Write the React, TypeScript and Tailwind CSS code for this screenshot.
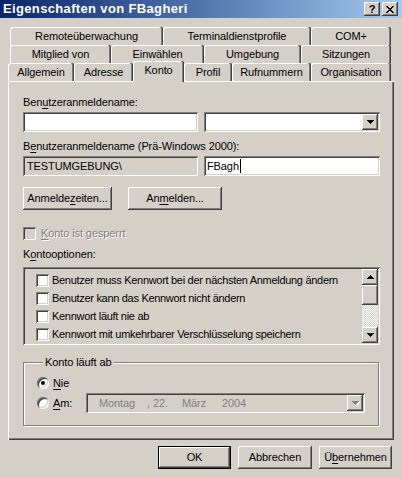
import type { ReactNode } from 'react';

const raised =
  'bg-[#d4d0c8] shadow-[inset_-1px_-1px_#404040,inset_1px_1px_#ffffff,inset_-2px_-2px_#808080,inset_2px_2px_#d4d0c8]';
const sunken =
  'shadow-[inset_1px_1px_#808080,inset_-1px_-1px_#ffffff,inset_2px_2px_#404040,inset_-2px_-2px_#d4d0c8]';
const tabEdge = 'shadow-[inset_-1px_0_#404040,inset_-2px_0_#808080,inset_1px_1px_#ffffff]';

type TabDef = { label: string; w: string; active?: boolean };

const rows: { indent: string; tabs: TabDef[] }[] = [
  {
    indent: 'pl-[10px]',
    tabs: [
      { label: 'Remoteüberwachung', w: 'w-[153px]' },
      { label: 'Terminaldienstprofile', w: 'w-[148px]' },
      { label: 'COM+', w: 'w-[80px]' },
    ],
  },
  {
    indent: 'pl-[10px]',
    tabs: [
      { label: 'Mitglied von', w: 'w-[101px]' },
      { label: 'Einwählen', w: 'w-[93px]' },
      { label: 'Umgebung', w: 'w-[97px]' },
      { label: 'Sitzungen', w: 'w-[90px]' },
    ],
  },
  {
    indent: 'pl-[8px]',
    tabs: [
      { label: 'Allgemein', w: 'w-[66px]' },
      { label: 'Adresse', w: 'w-[59px]' },
      { label: 'Konto', w: 'w-[51px]', active: true },
      { label: 'Profil', w: 'w-[48px]' },
      { label: 'Rufnummern', w: 'w-[79px]' },
      { label: 'Organisation', w: 'w-[80px]' },
    ],
  },
];

const options = [
  'Benutzer muss Kennwort bei der nächsten Anmeldung ändern',
  'Benutzer kann das Kennwort nicht ändern',
  'Kennwort läuft nie ab',
  'Kennwort mit umkehrbarer Verschlüsselung speichern',
];

// Unterstrichener Zugriffsbuchstabe
function U({ children }: { children: ReactNode }) {
  return <span className="underline decoration-1 underline-offset-[2px]">{children}</span>;
}

function Arrow({ up, color = '#000000' }: { up?: boolean; color?: string }) {
  const rowsPx = up ? [1, 3, 5, 7] : [7, 5, 3, 1];
  return (
    <svg width="7" height="4" viewBox="0 0 7 4" shapeRendering="crispEdges" aria-hidden="true">
      {rowsPx.map((w, i) => (
        <rect key={i} x={(7 - w) / 2} y={i} width={w} height={1} fill={color} />
      ))}
    </svg>
  );
}

function DropButton({ disabled, up }: { disabled?: boolean; up?: boolean }) {
  return (
    <div className={`flex h-[16px] w-[16px] shrink-0 items-center justify-center ${raised}`}>
      {disabled ? (
        <span className="relative">
          <span className="absolute left-[1px] top-[1px]">
            <Arrow color="#ffffff" />
          </span>
          <span className="relative block">
            <Arrow color="#808080" />
          </span>
        </span>
      ) : (
        <Arrow up={up} />
      )}
    </div>
  );
}

function Check({ disabled }: { disabled?: boolean }) {
  return (
    <span className={`block h-[13px] w-[13px] shrink-0 ${disabled ? 'bg-[#d4d0c8]' : 'bg-white'} ${sunken}`} />
  );
}

function Radio({ checked }: { checked?: boolean }) {
  return (
    <span
      className={`flex h-[12px] w-[12px] shrink-0 items-center justify-center rounded-full bg-white ${sunken}`}
    >
      {checked && <span className="block h-[4px] w-[4px] rounded-full bg-black" />}
    </span>
  );
}

function Button({ children, w, isDefault }: { children: ReactNode; w: string; isDefault?: boolean }) {
  const edge = isDefault
    ? 'bg-[#d4d0c8] shadow-[inset_0_0_0_1px_#000000,inset_-2px_-2px_#404040,inset_2px_2px_#ffffff,inset_-3px_-3px_#808080]'
    : raised;
  return (
    <div className={`flex h-[23px] items-center justify-center ${w} ${edge}`}>
      <span className="leading-[13px]">{children}</span>
    </div>
  );
}

function TitleBar() {
  return (
    <div className="flex h-[18px] items-center bg-linear-to-r from-[#0a246a] to-[#a6caf0] pl-[3px] pr-[4px]">
      <span className="flex-1 text-[13px] font-bold leading-[14px] tracking-[0.35px] text-white">
        Eigenschaften von FBagheri
      </span>
      <div className="flex gap-[2px]">
        <div className={`flex h-[14px] w-[16px] items-center justify-center ${raised}`}>
          <span className="text-[11px] font-bold leading-[11px]">?</span>
        </div>
        <div className={`flex h-[14px] w-[16px] items-center justify-center ${raised}`}>
          <svg width="8" height="7" viewBox="0 0 8 7" shapeRendering="crispEdges" aria-hidden="true">
            {[0, 1, 2, 3, 4, 5, 6].map((i) => (
              <g key={i} fill="#000000">
                <rect x={i} y={i} width={2} height={1} />
                <rect x={6 - i} y={i} width={2} height={1} />
              </g>
            ))}
          </svg>
        </div>
      </div>
    </div>
  );
}

function Tabs() {
  return (
    <div className="mt-[9px] flex flex-col">
      {rows.map((row, r) => (
        <div key={r} className={`flex h-[18px] items-start ${row.indent}`}>
          {row.tabs.map((tab) =>
            tab.active ? (
              <div
                key={tab.label}
                className={`relative z-10 -mt-[2px] flex h-[21px] items-start justify-center rounded-t-[2px] bg-[#d4d0c8] pt-[3px] ${tab.w} ${tabEdge}`}
              >
                <span className="leading-[13px]">{tab.label}</span>
              </div>
            ) : (
              <div
                key={tab.label}
                className={`flex h-[18px] shrink-0 items-center justify-center rounded-t-[2px] bg-[#d4d0c8] pt-[1px] ${tab.w} ${tabEdge}`}
              >
                <span className="leading-[13px]">{tab.label}</span>
              </div>
            ),
          )}
        </div>
      ))}
    </div>
  );
}

function KontoPanel() {
  return (
    <div className="ml-[8px] flex h-[359px] w-[386px] flex-col pl-[15px] pr-[13px] pt-[15px] shadow-[inset_1px_1px_#ffffff,inset_-1px_-1px_#404040,inset_-2px_-2px_#808080]">
      <div className="h-[13px] leading-[13px]">
        Ben<U>u</U>tzeranmeldename:
      </div>
      <div className="mt-[3px] flex gap-[6px]">
        <div className={`h-[20px] w-[175px] bg-white ${sunken}`} />
        <div className={`flex h-[20px] w-[176px] items-center justify-end bg-white pr-[2px] ${sunken}`}>
          <DropButton />
        </div>
      </div>

      <div className="mt-[8px] h-[13px] leading-[13px]">
        B<U>e</U>nutzeranmeldename (Prä-Windows 2000):
      </div>
      <div className="mt-[3px] flex gap-[6px]">
        <div className={`flex h-[20px] w-[175px] items-center bg-[#d4d0c8] pl-[4px] ${sunken}`}>
          <span className="leading-[13px]">TESTUMGEBUNG\</span>
        </div>
        <div className={`flex h-[20px] w-[176px] items-center bg-white pl-[3px] ${sunken}`}>
          <span className="leading-[13px]">FBagh</span>
          <span className="ml-[1px] block h-[14px] w-[1px] bg-black" />
        </div>
      </div>

      <div className="mt-[11px] flex gap-[16px]">
        <Button w="w-[89px]">
          Anmelde<U>z</U>eiten...
        </Button>
        <Button w="w-[94px]">
          An<U>m</U>elden...
        </Button>
      </div>

      <div className="mt-[17px] flex h-[13px] items-center gap-[5px]">
        <Check disabled />
        <span className="leading-[13px] text-[#808080] [text-shadow:1px_1px_#ffffff]">
          <U>K</U>onto ist gesperrt
        </span>
      </div>

      <div className="mt-[8px] h-[13px] leading-[13px]">
        K<U>o</U>ntooptionen:
      </div>
      <div className={`mt-[6px] flex h-[78px] w-[357px] p-[2px] ${sunken}`}>
        <div className="flex flex-1 flex-col pl-[11px] pt-[3px]">
          {options.map((o) => (
            <div key={o} className="flex h-[18px] items-center gap-[3px]">
              <Check />
              <span className="leading-[13px] tracking-[-0.3px]">{o}</span>
            </div>
          ))}
        </div>
        <div className="flex w-[16px] flex-col">
          <DropButton up />
          <div className={`h-[20px] ${raised}`} />
          <div className="flex-1 bg-[repeating-conic-gradient(#ffffff_0_25%,#d4d0c8_0_50%)] bg-[length:2px_2px]" />
          <DropButton />
        </div>
      </div>

      <fieldset className="mt-[11px] h-[70px] w-[356px] border border-[#808080] pb-[12px] pl-[13px] shadow-[inset_1px_1px_#ffffff,1px_1px_#ffffff]">
        <legend className="ml-[6px] bg-[#d4d0c8] px-[2px] leading-[13px]">Konto läuft ab</legend>
        <div className="mt-[6px] flex h-[16px] items-center gap-[4px]">
          <Radio checked />
          <span className="leading-[13px]">
            <U>N</U>ie
          </span>
        </div>
        <div className="mt-[2px] flex h-[20px] items-center">
          <Radio />
          <span className="ml-[4px] w-[33px] leading-[13px]">
            <U>A</U>m:
          </span>
          <div className={`flex h-[20px] w-[279px] items-center bg-[#d4d0c8] pl-[13px] pr-[2px] ${sunken}`}>
            <span className="flex flex-1 leading-[13px] text-[#808080]">
              <span>Montag</span>
              <span className="ml-[12px]">, 22.</span>
              <span className="ml-[14px]">März</span>
              <span className="ml-[16px]">2004</span>
            </span>
            <DropButton disabled />
          </div>
        </div>
      </fieldset>
    </div>
  );
}

export default function App() {
  return (
    <div className="h-[478px] w-[402px] overflow-hidden bg-[#d4d0c8] font-['Liberation_Sans',Arial,sans-serif] text-[11px] tracking-[-0.1px] text-black">
      <TitleBar />
      <Tabs />
      <KontoPanel />
      <div className="mt-[6px] flex justify-end gap-[7px] pr-[10px]">
        <Button w="w-[73px]" isDefault>
          OK
        </Button>
        <Button w="w-[74px]">Abbrechen</Button>
        <Button w="w-[73px]">
          Ü<U>b</U>ernehmen
        </Button>
      </div>
    </div>
  );
}
